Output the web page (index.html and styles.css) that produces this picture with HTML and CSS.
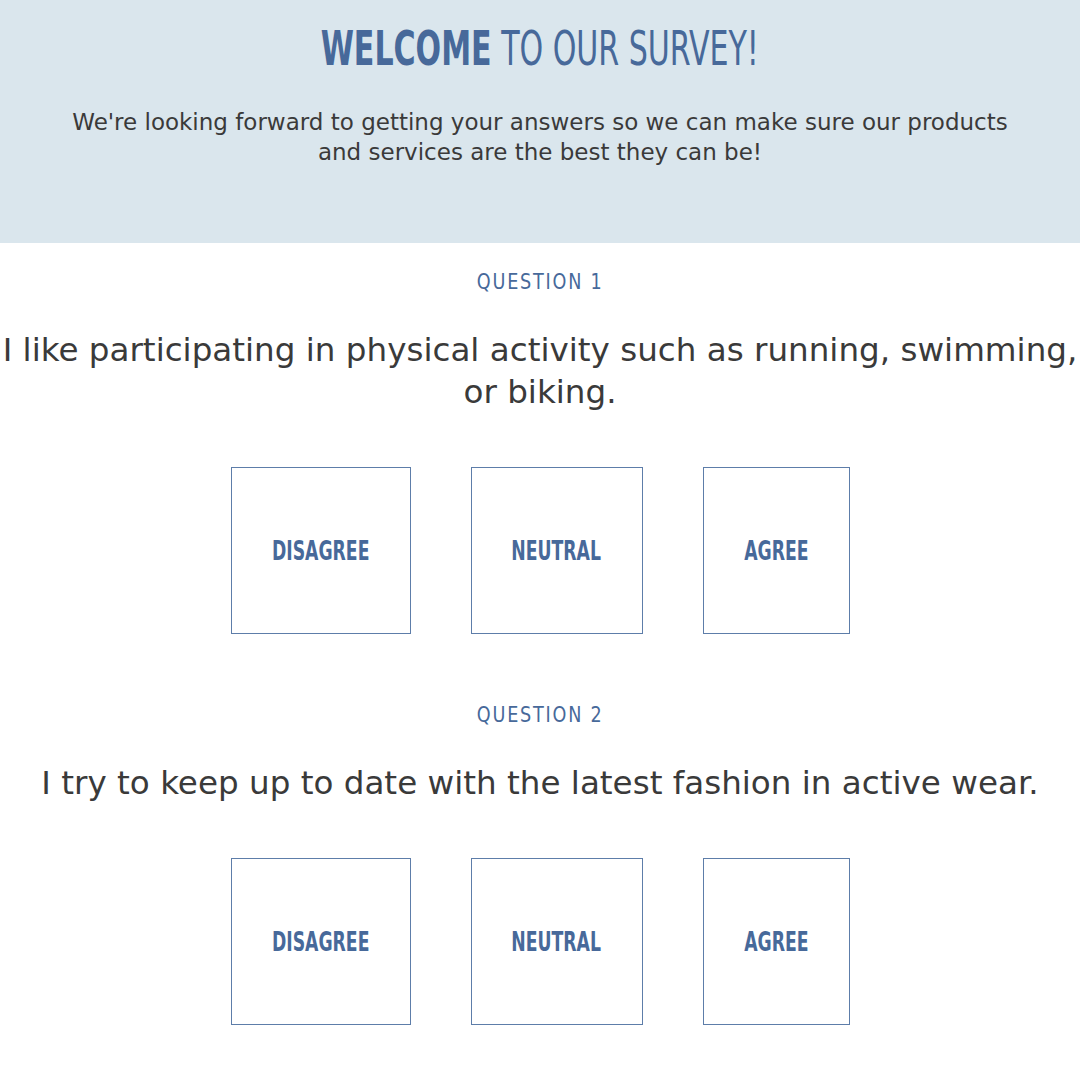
FILE: index.html
```html
<!DOCTYPE html>
<html lang="en">
<head>
<meta charset="utf-8">
<title>Survey</title>
<link rel="stylesheet" href="styles.css">
</head>
<body>
<header class="intro">
  <h1 class="intro__title"><span class="squeeze squeeze--title"><strong>WELCOME</strong> TO OUR SURVEY!</span></h1>
  <p class="intro__text">We're looking forward to getting your answers so we can make sure our products and services are the best they can be!</p>
</header>
<main class="survey">
  <section class="question">
    <h2 class="question__label"><span class="squeeze squeeze--label">QUESTION 1</span></h2>
    <p class="question__text">I like participating in physical activity such as running, swimming, or biking.</p>
    <div class="options">
      <button class="option"><span class="squeeze squeeze--option">DISAGREE</span></button>
      <button class="option"><span class="squeeze squeeze--option">NEUTRAL</span></button>
      <button class="option"><span class="squeeze squeeze--option">AGREE</span></button>
    </div>
  </section>
  <section class="question">
    <h2 class="question__label"><span class="squeeze squeeze--label">QUESTION 2</span></h2>
    <p class="question__text">I try to keep up to date with the latest fashion in active wear.</p>
    <div class="options">
      <button class="option"><span class="squeeze squeeze--option">DISAGREE</span></button>
      <button class="option"><span class="squeeze squeeze--option">NEUTRAL</span></button>
      <button class="option"><span class="squeeze squeeze--option">AGREE</span></button>
    </div>
  </section>
</main>
</body>
</html>
```
FILE: styles.css
```css
* { box-sizing: border-box; }

body {
  margin: 0;
  background: #ffffff;
  color: #3a3a3a;
  font-family: "DejaVu Sans", "Open Sans", sans-serif;
}

.squeeze {
  display: inline-block;
  white-space: nowrap;
  transform-origin: center center;
}

.intro {
  background: #dae6ed;
  padding: 20px 20px 76px;
  text-align: center;
}

.intro__title {
  margin: 0;
  font-family: "DejaVu Sans Condensed", "DejaVu Sans", sans-serif;
  font-stretch: condensed;
  font-weight: 400;
  font-size: 48px;
  line-height: 56px;
  color: #47699a;
}

.intro__title strong { font-weight: 700; }

.squeeze--title { transform: scaleX(0.696); }

.intro__text {
  max-width: 960px;
  margin: 31px auto 0;
  font-size: 23px;
  line-height: 30px;
  color: #3a3a3a;
}

.survey { padding-bottom: 40px; }

.question {
  margin-top: 68px;
  text-align: center;
}

.question:first-child { margin-top: 26px; }

.question__label {
  margin: 0;
  font-family: "DejaVu Sans Condensed", "DejaVu Sans", sans-serif;
  font-stretch: condensed;
  font-weight: 400;
  font-size: 22px;
  line-height: 26px;
  letter-spacing: 2px;
  color: #47699a;
}

.squeeze--label { transform: scaleX(0.89); }

.question__text {
  margin: 34px 0 54px;
  font-size: 32.6px;
  line-height: 42px;
  color: #3a3a3a;
}

.options {
  display: grid;
  grid-template-columns: 180px 172px 147px;
  gap: 60px;
  justify-content: center;
}

.option {
  height: 167px;
  display: flex;
  align-items: center;
  justify-content: center;
  padding: 0;
  background: #ffffff;
  border: 1px solid #5d7da9;
  font-family: "DejaVu Sans Condensed", "DejaVu Sans", sans-serif;
  font-stretch: condensed;
  font-weight: 700;
  font-size: 27px;
  line-height: 30px;
  color: #47699a;
  cursor: pointer;
}

.squeeze--option { transform: scaleX(0.71); }
```
